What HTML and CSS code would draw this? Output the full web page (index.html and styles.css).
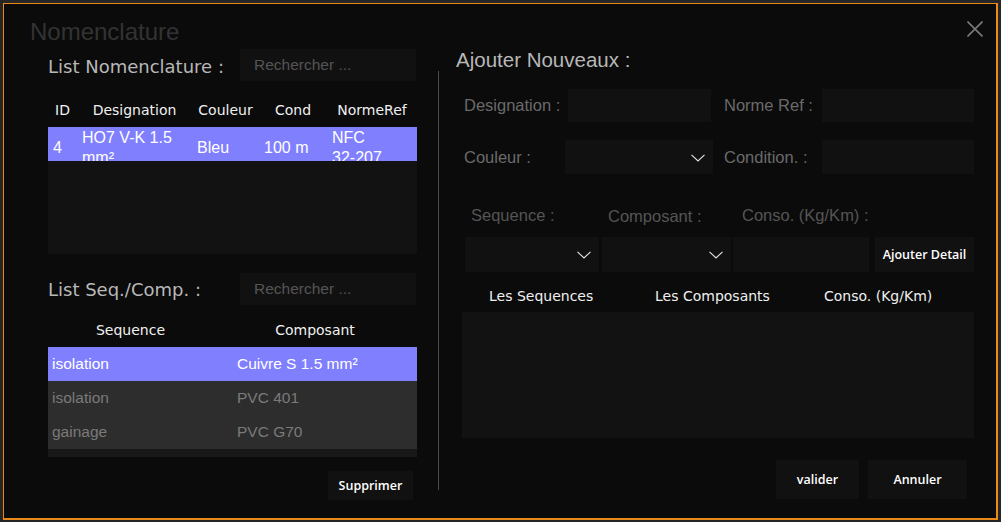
FILE: index.html
```html
<!DOCTYPE html>
<html lang="fr">
<head>
<meta charset="utf-8">
<title>Nomenclature</title>
<link rel="stylesheet" href="styles.css">
</head>
<body>
<div class="window">
  <div class="titlebar">
    <div class="title">Nomenclature</div>
    <svg class="close" width="16" height="16" viewBox="0 0 16 16"><path d="M0.5 0.5 L15.5 15.5 M15.5 0.5 L0.5 15.5" stroke="#7a7a7a" stroke-width="1.6" fill="none"/></svg>
  </div>
  <div class="main">
    <div class="left">
      <div class="section-head">
        <div class="section-label">List Nomenclature :</div>
        <div class="search">Rechercher ...</div>
      </div>
      <div class="nom-head">
        <div>ID</div><div>Designation</div><div>Couleur</div><div>Cond</div><div>NormeRef</div>
      </div>
      <div class="nom-table">
        <div class="nom-row selected">
          <div class="c-id">4</div>
          <div class="wrap">HO7 V-K 1.5 mm²</div>
          <div>Bleu</div>
          <div>100 m</div>
          <div class="wrap">NFC <span class="nowrap">32-207</span></div>
        </div>
      </div>
      <div class="section-head second">
        <div class="section-label">List Seq./Comp. :</div>
        <div class="search">Rechercher ...</div>
      </div>
      <div class="seq-head">
        <div>Sequence</div><div>Composant</div>
      </div>
      <div class="seq-table">
        <div class="seq-row selected"><div>isolation</div><div>Cuivre S 1.5 mm²</div></div>
        <div class="seq-row"><div>isolation</div><div>PVC 401</div></div>
        <div class="seq-row"><div>gainage</div><div>PVC G70</div></div>
      </div>
      <div class="actions-left">
        <div class="btn btn-supp">Supprimer</div>
      </div>
    </div>
    <div class="divider"></div>
    <div class="right">
      <div class="right-title">Ajouter Nouveaux :</div>
      <div class="form-row row1">
        <div class="lbl l-desig">Designation :</div>
        <div class="field f-desig"></div>
        <div class="lbl l-norme">Norme Ref :</div>
        <div class="field f-norme"></div>
      </div>
      <div class="form-row row2">
        <div class="lbl l-coul">Couleur :</div>
        <div class="field f-coul select"><svg class="chev" width="14" height="8" viewBox="0 0 14 8"><polyline points="0.5,0.8 7,7 13.5,0.8" fill="none" stroke="#e6e6e6" stroke-width="1.1"/></svg></div>
        <div class="lbl l-cond">Condition. :</div>
        <div class="field f-norme"></div>
      </div>
      <div class="detail-labels">
        <div class="dl dl-seq">Sequence :</div>
        <div class="dl dl-comp">Composant :</div>
        <div class="dl dl-conso">Conso. (Kg/Km) :</div>
      </div>
      <div class="detail-row">
        <div class="field select d-seq"><svg class="chev" width="14" height="8" viewBox="0 0 14 8"><polyline points="0.5,0.8 7,7 13.5,0.8" fill="none" stroke="#e6e6e6" stroke-width="1.1"/></svg></div>
        <div class="field select d-comp"><svg class="chev" width="14" height="8" viewBox="0 0 14 8"><polyline points="0.5,0.8 7,7 13.5,0.8" fill="none" stroke="#e6e6e6" stroke-width="1.1"/></svg></div>
        <div class="field d-conso"></div>
        <div class="btn d-add">Ajouter Detail</div>
      </div>
      <div class="det-head">
        <div>Les Sequences</div><div>Les Composants</div><div>Conso. (Kg/Km)</div>
      </div>
      <div class="det-table"></div>
      <div class="actions-right">
        <div class="btn b-valider">valider</div>
        <div class="btn b-annuler">Annuler</div>
      </div>
    </div>
  </div>
</div>
</body>
</html>
```

FILE: styles.css
```css
* { box-sizing: border-box; }
html, body { margin: 0; padding: 0; }
body {
  width: 1001px;
  height: 522px;
  background: #262626;
  padding: 3px 0 0 3px;
  overflow: hidden;
  font-family: "Liberation Sans", Arial, sans-serif;
}
.window {
  width: 995px;
  height: 517px;
  background: #0b0b0b;
  border: 1px solid #e8891a;
  border-right-width: 2px;
  border-bottom-width: 2px;
  display: flex;
  flex-direction: column;
}
.titlebar {
  height: 45px;
  display: flex;
  justify-content: space-between;
  align-items: flex-start;
  padding: 14px 13px 0 26px;
}
.title {
  font-size: 24px;
  color: #333333;
  line-height: 28px;
}
.close { margin-top: 3px; }
.main {
  display: flex;
  align-items: flex-start;
}
.left {
  width: 369px;
  margin-left: 44px;
  display: flex;
  flex-direction: column;
}
.section-head {
  display: flex;
  align-items: center;
  height: 32px;
}
.section-label {
  width: 192px;
  font-family: "DejaVu Sans", sans-serif;
  font-size: 18px;
  color: #b8b8b8;
  padding-top: 3px;
}
.section-head.second .section-label { padding-top: 0; }
.search {
  width: 176px;
  height: 32px;
  background: #111111;
  color: #555555;
  font-size: 15.5px;
  line-height: 32px;
  padding-left: 14px;
}
.nom-head, .seq-head, .det-head {
  display: grid;
  height: 34px;
  align-items: center;
  font-family: "DejaVu Sans", sans-serif;
  font-size: 14px;
  color: #f0f0f0;
  margin-top: 12px;
}
.nom-head {
  grid-template-columns: 29px 115px 67px 68px 90px;
  text-align: center;
}
.nom-table {
  height: 127px;
  background: #121212;
  overflow: hidden;
}
.nom-row {
  display: grid;
  grid-template-columns: 29px 115px 67px 68px 90px;
  height: 34px;
  align-items: center;
  overflow: hidden;
  color: #ffffff;
  font-size: 16px;
  line-height: 20px;
}
.nom-row > div { padding: 0 6px 0 5px; }
.nom-row > .wrap { align-self: start; padding-top: 1px; }
.nowrap { white-space: nowrap; }
.selected { background: #8080ff; }
.section-head.second { margin-top: 19px; }
.seq-head {
  grid-template-columns: 165px 204px;
  text-align: center;
  margin-top: 8px;
}
.seq-table {
  height: 110px;
  background: #181818;
}
.seq-row {
  display: grid;
  grid-template-columns: 185px 184px;
  height: 34px;
  align-items: center;
  background: #2d2d2d;
  color: #7a7a7a;
  font-size: 15.5px;
}
.seq-row > div { padding-left: 4px; }
.seq-row.selected { background: #8080ff; color: #ffffff; }
.actions-left {
  display: flex;
  justify-content: flex-end;
  padding-right: 4px;
  margin-top: 14px;
}
.btn {
  background: #111111;
  color: #ffffff;
  font-family: "Open Sans", sans-serif;
  font-weight: 600;
  font-size: 12.5px;
  display: flex;
  align-items: center;
  justify-content: center;
}
.btn-supp { width: 85px; height: 29px; }
.divider {
  width: 1px;
  height: 419px;
  background: #4a4a4a;
  margin-left: 21px;
  margin-top: 22px;
}
.right {
  width: 518px;
  margin-left: 17px;
  display: flex;
  flex-direction: column;
}
.right-title {
  font-size: 20.5px;
  color: #b8b8b8;
  line-height: 24px;
  margin-top: -1px;
}
.form-row {
  display: flex;
  align-items: center;
  height: 33px;
}
.row1 { margin-top: 17px; }
.row2 { margin-top: 18px; height: 34px; }
.lbl {
  font-size: 16.5px;
  color: #6a6a6a;
}
.field {
  background: #111111;
  height: 100%;
}
.select {
  display: flex;
  align-items: center;
  justify-content: flex-end;
  padding-right: 8px;
}
.chev { margin-top: 1px; }
.l-desig { width: 112px; padding-left: 8px; }
.f-desig { width: 143px; }
.l-norme { width: 111px; padding-left: 13px; }
.f-norme { width: 152px; }
.l-coul { width: 109px; padding-left: 8px; }
.f-coul { width: 148px; }
.l-cond { width: 109px; padding-left: 11px; }
.detail-labels {
  display: flex;
  margin-top: 30px;
  height: 22px;
  align-items: center;
  font-size: 16.5px;
  color: #555555;
}
.dl-seq { width: 152px; padding-left: 15px; }
.dl-comp { width: 134px; padding-top: 2px; }
.detail-row {
  display: flex;
  height: 35px;
  margin-top: 11px;
}
.d-seq { width: 134px; margin-left: 9px; }
.d-comp { width: 129px; margin-left: 3px; }
.d-conso { width: 136px; margin-left: 2px; }
.d-add { width: 99px; margin-left: 6px; }
.det-head {
  grid-template-columns: 166px 169px 1fr;
  padding-left: 33px;
  margin-top: 7px;
  height: 33px;
}
.det-table {
  height: 126px;
  background: #121212;
  margin-left: 6px;
}
.actions-right {
  display: flex;
  margin-top: 22px;
  padding-left: 320px;
}
.b-valider { width: 83px; height: 39px; }
.b-annuler { width: 99px; height: 39px; margin-left: 9px; }
```
